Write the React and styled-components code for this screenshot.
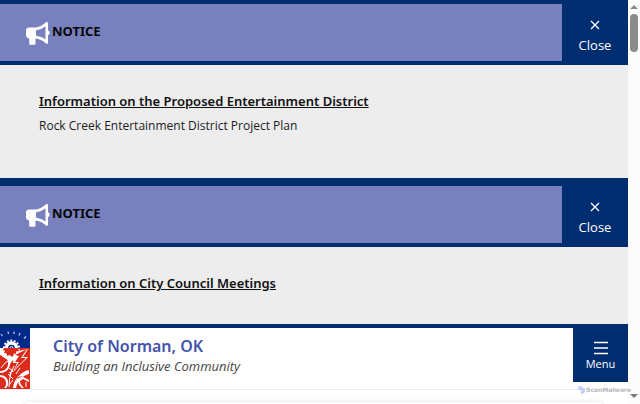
import React from "react";
import styled, { createGlobalStyle } from "styled-components";

const notices = [
    {
        id: "district",
        title: "Information on the Proposed Entertainment District",
        text: "Rock Creek Entertainment District Project Plan",
    },
    {
        id: "council",
        title: "Information on City Council Meetings",
    },
];

const Megaphone = () => (
    <svg width="24" height="24" viewBox="0 0 24 24" aria-hidden="true">
        <path
            fill="#ffffff"
            fillRule="evenodd"
            d="M20 1.2c1-.5 2 0 2 1.200v7.200c1 .2 1.600 1 1.600 2.200s-.6 2-1.600 2.200v7.400c0 1.200-1 1.600-2 1l-1.500-1.200c-2.600-2-5.500-3.300-9-3.600v4.800c0 .9-.5 1.400-1.400 1.400H4.600c-.9 0-1.400-.5-1.400-1.400v-4.900C1.200 17.200 0 16 0 14V9.500C0 7.600 1.300 6.500 3.200 6.500h5C12.500 6.500 16.200 4.600 20 1.200zM19.500 5.200c-3 2.200-6 3.600-9.500 4v5.600c3.500.3 6.600 1.500 9.500 3.600z"
        />
    </svg>
);

const Seal = () => (
    <svg width="30" height="61" viewBox="0 0 30 61" aria-hidden="true">
        <path fill="#00298a" d="M0 0h30v20H0z" />
        <path fill="#dc2a1b" d="M0 20h30v41H0z" />
        <g fill="none" stroke="#c3cee8" strokeWidth="1.200">
            <path d="M1 6l1.500 2M8 3.500l.5 2.500M14 3.500v2.500M20 5l-1 2.500M26 8.500l-2 2" />
        </g>
        <g fill="none" stroke="#ffffff">
            <path strokeWidth="2" strokeDasharray="1.900 1.600" d="M4 20a7.500 7.500 0 0 1 15 0" />
            <path strokeWidth="3.400" d="M6.500 20a5 5 0 0 1 10 0" />
            <path strokeWidth="1" d="M10 20a1.500 1.500 0 0 1 3 0" />
        </g>
        <g fill="#ffffff">
            <path d="M0 20h4l-1 2 2 1-1 2 3 0 0 3 3-1 2 2 2-2 3 1 0-3 3-1-2-3h2l-3 8-4 3-3 4-2-4-5-3-3-3z" />
            <path d="M14 24l14-3-5 8h5L13 44l4-9h-4z" />
            <path d="M0 25c7 0 11 5 10 12-1 5-5 8-10 8v-2c4 0 7-2 8-6 1-6-3-9-8-10z" />
            <path d="M28 42l1 1v3c-7 2-11 6-13 14h-3c1-9 7-15 15-18z" />
            <path d="M0 47c5 0 9 4 8 9 0 2-1 3-2 4H4c2-2 2-3 2-5 0-4-3-6-6-6z" />
            <path d="M18 52l5-3 6 3v2l-6-3-3 2c0 3 2 5 4 7h-2c-3-2-4-5-4-8z" />
        </g>
        <g fill="#dc2a1b">
            <path d="M5 21h13l-2 2v3l-3-1-2 3-2-3-3 1v-3z" />
            <path d="M27 21l-12 6 4 1-4 6h4l-5 8 12-12h-5z" />
            <path d="M23 48l-5 1-3 8 2-6z" />
        </g>
        <g fill="none" stroke="#ffffff" strokeWidth="1">
            <path d="M1 40q4-6 7-7M9 40l4 3-4 2M11 45q-2 6-2 14M14 38l-4 9M20 40l-4 6M8 46l5 5M13 52l-4 5M26 54v5" />
        </g>
    </svg>
);

const Notice = ({ id, title, text }) => (
    <NoticeBox aria-labelledby={id}>
        <NoticeBar>
            <NoticeLabel>
                <Megaphone />
                <NoticeName id={id}>NOTICE</NoticeName>
            </NoticeLabel>
            <CloseButton type="button">
                <svg width="10" height="10" viewBox="0 0 10 10" aria-hidden="true">
                    <path d="M1 1l8 8M9 1L1 9" stroke="currentColor" strokeWidth="1.300" />
                </svg>
                Close
            </CloseButton>
        </NoticeBar>
        <NoticeBody>
            <NoticeLink href="#">{title}</NoticeLink>
            {text && <NoticeText>{text}</NoticeText>}
        </NoticeBody>
    </NoticeBox>
);

const App = () => {
    return (
        <Window>
            <GlobalStyle />
            <Page>
                {notices.map((notice) => (
                    <Notice key={notice.id} {...notice} />
                ))}
                <Header>
                    <Seal />
                    <Brand>
                        <CityName href="#">City of Norman, OK</CityName>
                        <Tagline>Building an Inclusive Community</Tagline>
                    </Brand>
                    <MenuButton type="button">
                        <svg width="14" height="14" viewBox="0 0 14 14" aria-hidden="true">
                            <path d="M0 1.500h14M0 7h14M0 12.500h14" stroke="currentColor" strokeWidth="1.700" />
                        </svg>
                        Menu
                    </MenuButton>
                </Header>
                <Content>
                    <Card />
                </Content>
            </Page>
            <Scrollbar aria-hidden="true">
                <svg width="8" height="4" viewBox="0 0 8 4">
                    <path d="M4 0l4 4H0z" fill="#8b8b8b" />
                </svg>
                <Thumb />
                <svg width="8" height="4" viewBox="0 0 8 4">
                    <path d="M0 0h8L4 4z" fill="#7b7b7b" />
                </svg>
            </Scrollbar>
            <Watermark>
                <svg width="7" height="8" viewBox="0 0 7 8" aria-hidden="true">
                    <path d="M1 0v3l3 1v4M3 0v2l3 1v3L3 7" fill="none" stroke="#bcc6fa" strokeWidth="1.400" />
                </svg>
                ScanMalware
            </Watermark>
        </Window>
    );
};

const GlobalStyle = createGlobalStyle`
    * {
        box-sizing: border-box;
    }

    body {
        margin: 0;
        background: #ffffff;
        font-family: "Open Sans", "Noto Sans", sans-serif;
    }

    button {
        border: none;
        font-family: inherit;
        cursor: pointer;
    }

    svg {
        display: block;
        flex: none;
    }
`;
const Window = styled.div`
    position: relative;
    display: flex;
    height: 100vh;
    overflow: hidden;
`;
const Page = styled.main`
    flex: 1;
    min-width: 0;
`;
const NoticeBox = styled.section`
    background: #ededed;
    border-bottom: 4px solid #002c70;
`;
const NoticeBar = styled.div`
    display: flex;
    background: #002c70;
`;
const NoticeLabel = styled.div`
    flex: 1;
    display: flex;
    align-items: center;
    gap: 2px;
    margin: 4px 0;
    padding-left: 26px;
    background: #7881be;
`;
const NoticeName = styled.h2`
    margin: 0;
    padding-bottom: 4px;
    color: #050508;
    font-family: "Noto Sans", sans-serif;
    font-size: 13px;
    font-weight: 700;
    line-height: 20px;
`;
const CloseButton = styled.button`
    display: flex;
    flex-direction: column;
    align-items: center;
    gap: 5px;
    width: 66px;
    padding: 20px 0 10px;
    background: #002c70;
    color: #ffffff;
    font-size: 13px;
    line-height: 20px;
`;
const NoticeBody = styled.div`
    padding: 26px 39px 31px;
`;
const NoticeLink = styled.a`
    display: block;
    width: fit-content;
    color: #111111;
    font-family: "Noto Sans", sans-serif;
    font-size: 13px;
    font-weight: 600;
    line-height: 20px;
`;
const NoticeText = styled.p`
    margin: 5px 0 11px;
    color: #1c1c1c;
    font-size: 12px;
    line-height: 20px;
`;
const Header = styled.header`
    display: flex;
    align-items: flex-start;
    background: #ffffff;
    border-bottom: 1px solid #ededed;
`;
const Brand = styled.div`
    flex: 1;
    padding: 6px 23px;
`;
const CityName = styled.a`
    display: block;
    color: #4553aa;
    font-family: "Noto Sans", sans-serif;
    font-size: 16px;
    font-weight: 600;
    line-height: 24px;
    text-decoration: none;
`;
const Tagline = styled.p`
    margin: 0;
    color: #444444;
    font-size: 13px;
    font-style: italic;
    line-height: 16px;
`;
const MenuButton = styled.button`
    display: flex;
    flex-direction: column;
    align-items: center;
    gap: 1px;
    width: 55px;
    padding: 13px 0 10px;
    background: #002c70;
    color: #ffffff;
    font-size: 11px;
    line-height: 16px;
`;
const Content = styled.div`
    padding: 12px 25px;
`;
const Card = styled.div`
    height: 40px;
    border-radius: 4px;
    background: #ffffff;
    box-shadow: 0 0 4px #dddddd;
`;
const Scrollbar = styled.div`
    display: flex;
    flex-direction: column;
    align-items: center;
    gap: 5px;
    width: 12px;
    padding: 5px 0 6px;
    background: #fcfcfc;

    svg:last-child {
        margin-top: auto;
    }
`;
const Thumb = styled.div`
    width: 8px;
    height: 38px;
    border-radius: 4px;
    background: #8b8b8b;
`;
const Watermark = styled.div`
    position: absolute;
    right: 9px;
    bottom: 10px;
    display: flex;
    align-items: center;
    gap: 1px;
    color: #b9b9be;
    font-family: "DejaVu Sans", sans-serif;
    font-size: 6px;
    font-weight: 700;
    line-height: 8px;
`;

export default App;
